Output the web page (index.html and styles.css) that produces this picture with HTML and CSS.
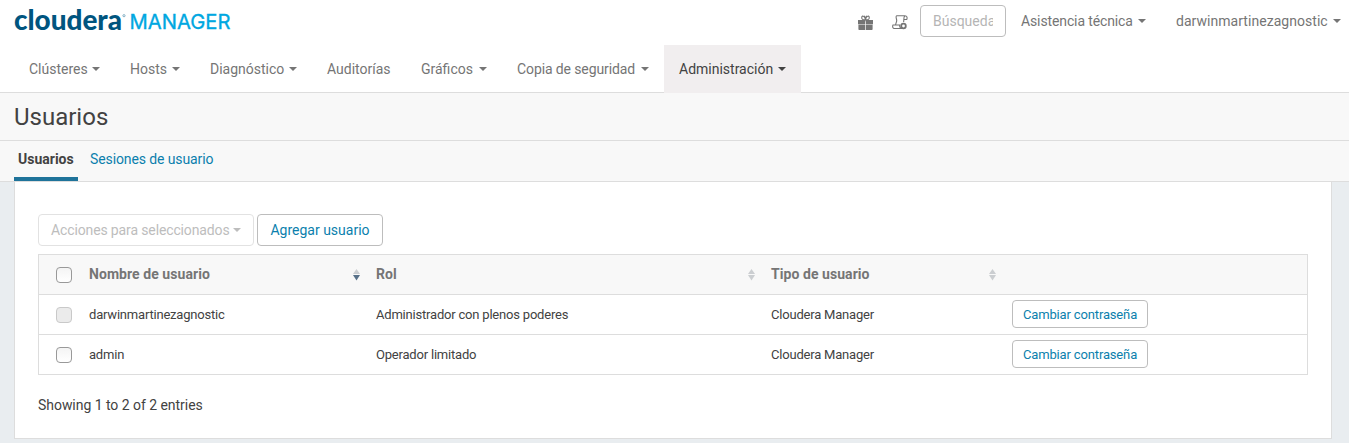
FILE: index.html
```html
<!DOCTYPE html>
<html lang="es">
<head>
<meta charset="utf-8">
<title>Usuarios - Cloudera Manager</title>
<link rel="stylesheet" href="styles.css">
</head>
<body>
<header class="topbar">
  <svg class="logo" width="220" height="36" viewBox="0 0 220 36" role="img" aria-label="Cloudera Manager">
    <text class="logo-brand" x="0" y="29.5" textLength="108" lengthAdjust="spacingAndGlyphs">cloudera</text>
    <circle class="logo-mark" cx="110" cy="15.7" r="1.1"/>
    <text class="logo-product" x="115.500" y="29.3" textLength="101" lengthAdjust="spacingAndGlyphs">MANAGER</text>
  </svg>
  <div class="tools">
    <svg class="gift" width="15" height="15" viewBox="0 0 15 15">
      <path class="fill" d="M0 5h7.100v4.300H0zM7.800 5H15v4.300H7.800zM.4 9.800h6.700V15H1.200q-.8 0-.8-.8zM7.800 9.800h6.800v4.400q0 .8-.8.8h-6z"/>
      <path class="line" d="M7 4.800C4.500 4.800 3.300 3.800 3.800 2 4.500 0 6.700 1.500 7.500 4.500 8.300 1.500 10.500 0 11.200 2c.5 1.800-.7 2.800-3.200 2.800M6.100.8 7.500 2.800 8.900.8"/>
    </svg>
    <svg class="scroll" width="16" height="15" viewBox="0 0 16 15">
      <path class="line" d="M4.500.7H13M4.500.7C3.200 2.500 5.200 4.300 4.600 6.300L3.500 9.800M13 .7c-1.800 1.300-.8 3.500-1.400 6.500M13 .7c2 0 2.500 2 1.700 3.800h-2.600M1 10h6.600c0 2 .8 3.500 2.400 3.500H2.300C.7 13.500.3 11.500 1 10z"/>
      <circle class="gear" cx="11.500" cy="11" r="2.300"/>
    </svg>
    <input class="search" type="text" placeholder="Búsqueda" aria-label="Búsqueda">
    <a class="account support">Asistencia técnica<i class="caret"></i></a>
    <a class="account user">darwinmartinezagnostic<i class="caret"></i></a>
  </div>
</header>
<nav class="nav">
  <a class="nav-item">Clústeres<i class="caret"></i></a>
  <a class="nav-item">Hosts<i class="caret"></i></a>
  <a class="nav-item">Diagnóstico<i class="caret"></i></a>
  <a class="nav-item">Auditorías</a>
  <a class="nav-item">Gráficos<i class="caret"></i></a>
  <a class="nav-item tight">Copia de seguridad<i class="caret"></i></a>
  <a class="nav-item active">Administración<i class="caret"></i></a>
</nav>
<h1 class="title">Usuarios</h1>
<div class="tabs">
  <a class="tab selected">Usuarios</a>
  <a class="tab tight">Sesiones de usuario</a>
</div>
<main class="panel">
  <div class="actions">
    <button class="btn disabled">Acciones para seleccionados<i class="caret"></i></button>
    <button class="btn">Agregar usuario</button>
  </div>
  <div class="table">
    <div class="row head">
      <span class="check"></span>
      <span class="cell"><span class="label">Nombre de usuario</span><svg class="sort desc" width="7" height="12" viewBox="0 0 7 12"><path d="M3.500 0 7 5H0z"/><path class="down" d="M0 6h7l-3.500 5.500z"/></svg></span>
      <span class="cell"><span class="label">Rol</span><svg class="sort" width="7" height="12" viewBox="0 0 7 12"><path d="M3.500 0 7 5H0z"/><path class="down" d="M0 6h7l-3.500 5.500z"/></svg></span>
      <span class="cell type"><span class="label">Tipo de usuario</span><svg class="sort" width="7" height="12" viewBox="0 0 7 12"><path d="M3.500 0 7 5H0z"/><path class="down" d="M0 6h7l-3.500 5.500z"/></svg></span>
      <span class="cell"></span>
    </div>
    <div class="row">
      <span class="check off"></span>
      <span class="cell">darwinmartinezagnostic</span>
      <span class="cell">Administrador con plenos poderes</span>
      <span class="cell">Cloudera Manager</span>
      <span class="cell"><button class="btn small">Cambiar contraseña</button></span>
    </div>
    <div class="row">
      <span class="check"></span>
      <span class="cell">admin</span>
      <span class="cell">Operador limitado</span>
      <span class="cell">Cloudera Manager</span>
      <span class="cell"><button class="btn small">Cambiar contraseña</button></span>
    </div>
  </div>
  <p class="summary">Showing 1 to 2 of 2 entries</p>
</main>
</body>
</html>
```
FILE: styles.css
```css
* { box-sizing: border-box; }
body {
  margin: 0;
  height: 443px;
  overflow: hidden;
  background: #e9edf0;
  color: #424242;
  font: 14px/20px Roboto, sans-serif;
}
.topbar {
  display: flex;
  justify-content: space-between;
  height: 45px;
  padding-left: 14px;
  background: #fff;
}
.logo { flex: none; overflow: visible; }
.logo-brand { font: 900 28.5px Lato, sans-serif; fill: #00557f; }
.logo-product { font: 400 20.5px Inter, sans-serif; fill: #00a7e1; stroke: #00a7e1; stroke-width: .35px; }
.logo-mark { fill: none; stroke: #5590ae; stroke-width: .7; }
.tools { display: flex; align-items: center; height: 42px; padding-right: 8px; color: #757575; }
.tools .fill { fill: #757575; }
.tools .line { fill: none; stroke: #757575; stroke-width: 1.1; }
.gift { margin: 2px 19px 0 0; }
.scroll { margin: 2px 12px 0 0; }
.gear { fill: #fff; stroke: #757575; stroke-width: 1.8; }
.search {
  width: 86px;
  height: 32px;
  margin-right: 15px;
  padding: 0 12px;
  border: 1px solid #bdbdbd;
  border-radius: 4px;
  font: inherit;
}
.search::placeholder { color: #b5b5b5; opacity: 1; }
.account { display: flex; align-items: center; justify-content: space-between; }
.support { width: 125px; margin-right: 30px; letter-spacing: -.12px; }
.user { width: 165px; letter-spacing: .04px; }
.tight { letter-spacing: -.11px; }
.caret {
  flex: none;
  width: 0;
  height: 0;
  border: 4px solid transparent;
  border-top-color: currentColor;
  border-bottom: 0;
}
.nav {
  display: grid;
  grid-template-columns: 101px 80px 117px 94px 96px 162px 137px;
  height: 48px;
  padding-left: 14px;
  background: #fff;
  border-bottom: 1px solid #ddd;
}
.nav-item {
  display: flex;
  align-items: center;
  justify-content: space-between;
  height: 48px;
  padding: 0 15px;
  color: #757575;
}
.nav-item.active { background: #f1eeef; color: #424242; }
.title {
  height: 48px;
  margin: 0;
  padding-left: 14px;
  background: #f8f8f8;
  border-bottom: 1px solid #ddd;
  font-size: 24px;
  font-weight: 400;
  line-height: 49px;
}
.tabs {
  display: flex;
  gap: 8px;
  height: 41px;
  padding-left: 14px;
  background: #f8f8f8;
  border-bottom: 1px solid #ddd;
}
.tab { height: 40px; padding: 8px 4px 0; color: #0b7fad; }
.tab.selected { width: 64px; border-bottom: 4px solid #1f739a; color: #424242; font-weight: 700; }
.panel {
  width: 1318px;
  height: 257px;
  margin-left: 14px;
  padding: 32px 23px 0;
  background: #fff;
  border: 1px solid #ddd;
  border-top: 0;
}
.actions { display: flex; gap: 3px; margin-bottom: 8px; }
.btn {
  display: flex;
  align-items: center;
  justify-content: center;
  width: 126px;
  height: 32px;
  padding: 0;
  background: #fff;
  border: 1px solid #bdbdbd;
  border-radius: 4px;
  color: #0b7fad;
  font: inherit;
  white-space: nowrap;
}
.btn.disabled {
  width: 216px;
  padding: 0 12px;
  justify-content: space-between;
  border-color: #e2e2e2;
  color: #bdbdbd;
  letter-spacing: -.13px;
}
.btn.small { width: 136px; height: 28px; margin: 0 0 2px -4px; padding-top: 2px; letter-spacing: -.15px; }
.table { width: 1270px; border: 1px solid #ddd; }
.row {
  display: grid;
  grid-template-columns: 50px 287px 395px 245px 1fr;
  align-items: center;
  height: 40px;
  border-bottom: 1px solid #ddd;
  font-size: 13px;
  letter-spacing: -.2px;
}
.row:last-child { height: 39px; border-bottom: 0; }
.head { background: #f8f8f8; color: #757575; font-size: 14px; font-weight: 700; letter-spacing: .06px; }
.cell { display: flex; align-items: center; justify-content: space-between; padding-right: 16px; }
.cell.type { padding-right: 20px; }
.label { padding-bottom: 2px; }
.sort { fill: #cbced1; }
.sort.desc .down { fill: #587189; }
.check {
  width: 16px;
  height: 16px;
  margin: 1px 0 0 17px;
  background: linear-gradient(#f4f4f4, #fff);
  border: 1px solid #999;
  border-radius: 4px;
}
.check.off { background: #ebebeb; border-color: #c9c9c9; }
.summary { margin: 20px 0 0; letter-spacing: -.04px; }
```
